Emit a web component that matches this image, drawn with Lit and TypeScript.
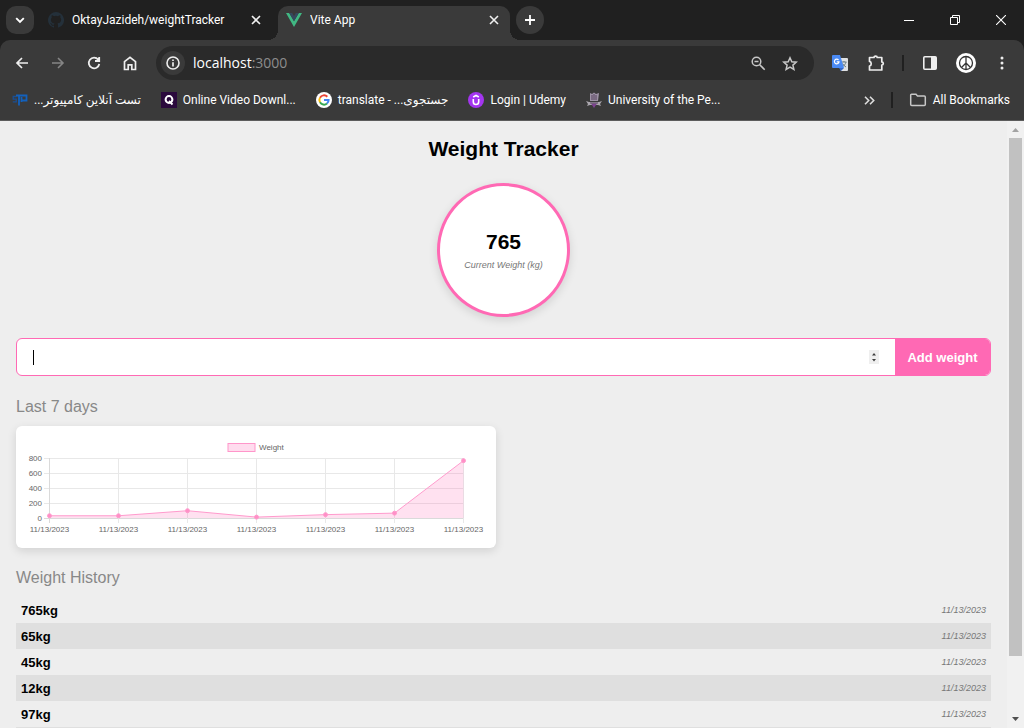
import { LitElement, html, css, svg } from "lit";
import { customElement, state } from "lit/decorators.js";

interface Entry {
  weight: number;
  date: string;
}

@customElement("browser-chrome")
class BrowserChrome extends LitElement {
  static styles = css`
    :host {
      display: block;
      background: #202020;
      color: #fff;
      font: 12px/16px Roboto, "Noto Sans", "DejaVu Sans", sans-serif;
    }
    button, a {
      font: inherit;
      color: inherit;
      background: none;
      border: 0;
      padding: 0;
      margin: 0;
      text-decoration: none;
    }
    svg { display: block; flex: none; }
    button { display: grid; place-items: center; flex: none; }
    .tabs {
      display: flex;
      height: 40px;
      padding: 6px 0 0 6px;
      box-sizing: border-box;
    }
    .search { width: 28px; height: 28px; border-radius: 10px; background: #3a3a3a; }
    .tab {
      display: flex;
      align-items: center;
      height: 28px;
      box-sizing: border-box;
      width: 232px;
      padding: 0 11px 0 8px;
      gap: 8px;
    }
    .tab.idle { width: 244px; padding: 0 17px 0 14px; }
    .tab .name { flex: 1; white-space: nowrap; overflow: hidden; }
    .tab.active {
      position: relative;
      height: 34px;
      padding-bottom: 6px;
      background: #3a3a3a;
      border-radius: 10px 10px 0 0;
    }
    .tab.active::before, .tab.active::after {
      content: "";
      position: absolute;
      bottom: 0;
      width: 10px;
      height: 10px;
    }
    .tab.active::before { right: 100%; background: radial-gradient(circle at 0 0, transparent 10px, #3a3a3a 10px); }
    .tab.active::after { left: 100%; background: radial-gradient(circle at 100% 0, transparent 10px, #3a3a3a 10px); }
    .add { width: 28px; height: 28px; border-radius: 50%; background: #3a3a3a; margin-left: 6px; }
    .window { display: flex; margin-left: auto; }
    .window button { width: 46px; height: 28px; }
    .toolbar {
      display: flex;
      align-items: center;
      height: 46px;
      background: #3a3a3a;
      border-radius: 10px 10px 0 0;
      padding-right: 4px;
    }
    .nav { display: flex; padding-left: 4px; }
    .nav button { width: 36px; height: 36px; }
    .omnibox {
      flex: 1;
      display: flex;
      align-items: center;
      height: 34px;
      margin-left: 8px;
      padding: 0 8px 0 5px;
      background: #2a2a2a;
      border-radius: 17px;
    }
    .info { width: 24px; height: 24px; border-radius: 50%; background: #3a3a3a; }
    .url { flex: 1; padding-left: 8px; font: 14px/18px "Open Sans", "Noto Sans", sans-serif; }
    .port { color: #8d8d8d; }
    .omnibox .act { width: 32px; height: 32px; }
    .tools { display: flex; align-items: center; padding-left: 8px; }
    .tools button { width: 36px; height: 36px; }
    .sep { width: 2px; height: 16px; background: #202020; flex: none; }
    .tools .sep { margin: 0 8px; }
    .bookmarks {
      display: flex;
      align-items: center;
      height: 35px;
      background: #3a3a3a;
      padding: 0 14px 6px 12px;
      border-bottom: 1px solid #5c5c5c;
      box-sizing: border-box;
      gap: 20px;
    }
    .bookmarks a { display: flex; align-items: center; gap: 6px; white-space: nowrap; }
    .more { margin-left: auto; }
    .bookmarks .sep { margin: 0 -4px; }
  `;

  private close() {
    return svg`<path d="M1 1l8 8M9 1l-8 8" stroke="#f0f0f0" stroke-width="1.6"/>`;
  }

  render() {
    return html`
      <div class="tabs">
        <button class="search" aria-label="Search tabs">
          <svg width="10" height="7" viewBox="0 0 10 7"><path d="M1.2 1.2L5 5l3.8-3.8" fill="none" stroke="#fff" stroke-width="1.9"/></svg>
        </button>
        <div class="tab idle">
          <svg width="16" height="16" viewBox="0 0 16 16"><path fill="#24303a" d="M8 0a8 8 0 0 0-2.53 15.59c.4.07.55-.17.55-.38v-1.49c-2.23.48-2.69-.95-2.69-.95-.36-.92-.89-1.17-.89-1.17-.73-.5.05-.49.05-.49.81.06 1.23.83 1.23.83.72 1.23 1.88.87 2.34.66.07-.52.28-.87.51-1.07-1.78-.2-3.64-.89-3.64-3.95 0-.87.31-1.59.82-2.15-.08-.2-.36-1.01.08-2.11 0 0 .67-.22 2.2.82a7.6 7.6 0 0 1 4 0c1.53-1.04 2.2-.82 2.2-.82.44 1.1.16 1.91.08 2.11.51.56.82 1.28.82 2.15 0 3.07-1.87 3.75-3.65 3.95.29.25.54.73.54 1.48v2.2c0 .21.15.46.55.38A8 8 0 0 0 8 0z"/></svg>
          <span class="name">OktayJazideh/weightTracker</span>
          <button aria-label="Close tab"><svg width="10" height="10">${this.close()}</svg></button>
        </div>
        <div class="tab active">
          <svg width="16" height="14" viewBox="0 0 16 14"><path fill="#41b883" d="M0 0h3.2L8 8.3 12.8 0H16L8 14z"/><path fill="#35495e" d="M3.2 0h3L8 3.2 9.8 0h3L8 8.3z"/></svg>
          <span class="name">Vite App</span>
          <button aria-label="Close tab"><svg width="10" height="10">${this.close()}</svg></button>
        </div>
        <button class="add" aria-label="New tab"><svg width="10" height="10"><path d="M5 0v10M0 5h10" stroke="#fff" stroke-width="1.8"/></svg></button>
        <div class="window">
          <button aria-label="Minimize"><svg width="10" height="10"><path d="M0 5.5h10" stroke="#fff"/></svg></button>
          <button aria-label="Restore"><svg width="10" height="10"><path d="M.5 2.5h7v7h-7zM2.5 2.5v-2h7v7h-2" fill="none" stroke="#fff"/></svg></button>
          <button aria-label="Close"><svg width="10" height="10"><path d="M0 0l10 10M10 0L0 10" stroke="#fff" stroke-width="1.1"/></svg></button>
        </div>
      </div>
      <div class="toolbar">
        <div class="nav">
          <button aria-label="Back"><svg width="14" height="12"><path d="M13 6H2M7 1L2 6l5 5" fill="none" stroke="#eee" stroke-width="1.7"/></svg></button>
          <button aria-label="Forward"><svg width="14" height="12"><path d="M1 6h11M7 1l5 5-5 5" fill="none" stroke="#858585" stroke-width="1.6"/></svg></button>
          <button aria-label="Reload"><svg width="14" height="14"><path d="M11.2 3.6A5.3 5.3 0 1 0 12.3 8M12.2 1v4H8" fill="none" stroke="#eee" stroke-width="1.8"/></svg></button>
          <button aria-label="Home"><svg width="14" height="15"><path d="M1.5 13.5V5.6L7 1.3l5.500 4.300v7.900H8.800V8.800H5.200v4.700z" fill="none" stroke="#eee" stroke-width="1.7"/></svg></button>
        </div>
        <div class="omnibox">
          <button class="info" aria-label="Site information"><svg width="14" height="14"><circle cx="7" cy="7" r="6" fill="none" stroke="#eee" stroke-width="1.6"/><path d="M7 6.2v4.2M7 3.4v1.7" stroke="#eee" stroke-width="1.7"/></svg></button>
          <span class="url">localhost<span class="port">:3000</span></span>
          <button class="act" aria-label="Zoom"><svg width="15" height="15"><circle cx="5.5" cy="5.5" r="4.3" fill="none" stroke="#c7c7c7" stroke-width="1.5"/><path d="M8.7 8.7l5 5M3.500 5.500h4" fill="none" stroke="#c7c7c7" stroke-width="1.6"/></svg></button>
          <button class="act" aria-label="Bookmark this page"><svg width="16" height="15" viewBox="0 0 16 15"><path d="M8 1.800l1.800 4 4.400.4-3.300 2.900 1 4.300L8 11.100l-3.900 2.300 1-4.300-3.300-2.900 4.400-.4z" fill="none" stroke="#c7c7c7" stroke-width="1.5"/></svg></button>
        </div>
        <div class="tools">
          <button aria-label="Translate"><svg width="16" height="16"><path d="M6 3h9a1 1 0 0 1 1 1v11a1 1 0 0 1-1 1H9z" fill="#dfe1e3"/><path d="M9.500 7h5M12 6v1M14 7c-.5 2-2 4-4 5M10.500 8.500c.8 1.500 2 2.500 3.500 3.500" fill="none" stroke="#687c86"/><path d="M1 0h7l4 13H1a1 1 0 0 1-1-1V1a1 1 0 0 1 1-1z" fill="#4a8af4"/><path d="M7 13h5l-3 3z" fill="#3568c9"/><path d="M6.500 5A2.300 2.300 0 1 0 7 6.800H4.700" fill="none" stroke="#fff" stroke-width="1.2"/></svg></button>
          <button aria-label="Extensions"><svg width="17" height="17"><path d="M2 2.500h4C6 .6 9.200.6 9.200 2.500h4.600v4.500c2 0 2 3 0 3v5H1.500v-4c2.300-.3 2.300-4.300 0-4.600V2.500z" fill="none" stroke="#eee" stroke-width="1.7" stroke-linejoin="round"/></svg></button>
          <span class="sep"></span>
          <button aria-label="Side panel"><svg width="14" height="14"><rect x=".8" y=".8" width="12.4" height="12.4" rx="1" fill="none" stroke="#eee" stroke-width="1.6"/><path d="M8 1h5v12H8z" fill="#eee"/></svg></button>
          <button aria-label="Profile"><svg width="20" height="20"><circle cx="10" cy="10" r="10" fill="#fff"/><circle cx="10" cy="10" r="6.5" fill="none" stroke="#333" stroke-width="1.3"/><path d="M10 3.500v13M10 10l-4.500 4.500M10 10l4.500 4.500" stroke="#333" stroke-width="1.3"/></svg></button>
          <button aria-label="Menu"><svg width="4" height="14" fill="#eee"><circle cx="2" cy="2" r="1.5"/><circle cx="2" cy="7" r="1.5"/><circle cx="2" cy="12" r="1.5"/></svg></button>
        </div>
      </div>
      <nav class="bookmarks">
        <a href="#"><svg width="16" height="16"><path d="M4.500 4.500H1.200v2.600h3v2.700H.8" fill="none" stroke="#1a4f94" stroke-width="1.3"/><path d="M4 3.500h10.500v5H9.500" fill="none" stroke="#1261bd" stroke-width="1.8"/><path d="M7 3v10.500M9.500 5v5" stroke="#1261bd" stroke-width="1.8"/></svg><span dir="rtl">تست آنلاین کامپیوتر...</span></a>
        <a href="#"><svg width="16" height="16"><path fill="#2b0a3d" d="M0 0h16v16H0z"/><circle cx="8" cy="7.5" r="3.4" fill="none" stroke="#fff" stroke-width="2"/><path d="M8 9l3.500 3.500" stroke="#fff" stroke-width="1.8"/></svg>Online Video Downl...</a>
        <a href="#"><svg width="16" height="16" fill="none" stroke-width="2"><circle cx="8" cy="8" r="8" fill="#fff"/><path d="M11.300 4.700A4.600 4.600 0 0 0 4 5.700" stroke="#ea4335"/><path d="M4 5.700a4.600 4.600 0 0 0 0 4.600" stroke="#fbbc05"/><path d="M4 10.300a4.600 4.600 0 0 0 7 1.200" stroke="#34a853"/><path d="M11 11.500A4.600 4.600 0 0 0 12.600 8H8" stroke="#4285f4"/></svg><span>translate - <bdi dir="rtl">جستجوی...</bdi></span></a>
        <a href="#"><svg width="16" height="16"><circle cx="8" cy="8" r="8" fill="#a435f0"/><path d="M5.300 7v2.800a2.700 2.700 0 0 0 5.400 0V7M5.200 5L8 3.500 10.800 5" fill="none" stroke="#fff" stroke-width="1.6"/></svg>Login | Udemy</a>
        <a href="#"><svg width="16" height="16"><path d="M4 1l2 1 2-1.500L10 2l3-1-1 8H4z" fill="#9d92a5"/><path d="M0 9l3 1h10l3-1-2 3 1 2-3-1H4l-3 1 1-2z" fill="#aaa6ad"/><path d="M5 11.500h6L8 16z" fill="#7d4390"/><path d="M6 3v5M8 2v6M10 3v5M4 11h8" stroke="#56425f"/></svg>University of the Pe...</a>
        <button class="more" aria-label="More bookmarks"><svg width="11" height="9"><path d="M1 .8l3.700 3.700L1 8.200M6 .8l3.700 3.700L6 8.200" fill="none" stroke="#ddd" stroke-width="1.6"/></svg></button>
        <span class="sep"></span>
        <a href="#"><svg width="18" height="14"><path d="M1.700 2v9.500a1 1 0 0 0 1 1h12.600a1 1 0 0 0 1-1V4a1 1 0 0 0-1-1H8.500L7 1.200H2.500a.8.8 0 0 0-.8.8z" fill="none" stroke="#c7c7c7" stroke-width="1.5"/></svg>All Bookmarks</a>
      </nav>
    `;
  }
}

@customElement("weight-chart")
class WeightChart extends LitElement {
  static properties = { entries: { attribute: false } };
  declare entries: Entry[];

  static styles = css`
    :host {
      display: block;
      max-width: 480px;
      background: #fff;
      border-radius: 6px;
      box-shadow: 0 3px 10px rgba(0, 0, 0, 0.12);
    }
    svg { display: block; width: 100%; height: auto; }
    text { font: 8px "Liberation Sans", Arial, sans-serif; fill: #666; }
    .grid { stroke: #e8e8e8; }
    .axis { stroke: #dadada; }
    .area { fill: rgba(255, 105, 180, 0.2); }
    .line { fill: none; stroke: #ff9bcd; }
    .dot { fill: #ff8fc6; stroke: #ff9bcd; }
    .key { fill: #ffdcee; stroke: #ff96ca; }
    .end { text-anchor: end; }
    .mid { text-anchor: middle; }
  `;

  render() {
    const x = (i: number) => 33.5 + i * 69;
    const y = (w: number) => 92 - w * 0.075;
    const line = this.entries.map((e, i) => `${x(i)},${y(e.weight)}`).join(" ");
    return html`
      <svg viewBox="0 0 480 122" role="img" aria-label="Weight over the last 7 days">
        <rect class="key" x="212" y="17.5" width="27" height="8"></rect>
        <text x="243" y="24">Weight</text>
        ${[800, 600, 400, 200, 0].map((v, i) => svg`
          <path class=${v ? "grid" : "axis"} d="M28 ${32.5 + i * 15}H447.5"/>
          <text class="end" x="26" y=${35 + i * 15}>${v}</text>`)}
        ${this.entries.map((e, i) => svg`
          <path class=${i ? "grid" : "axis"} d="M${x(i)} 32V97"/>
          <text class="mid" x=${x(i)} y="106">${e.date}</text>`)}
        <polygon class="area" points="33.5,92 ${line} 447.5,92"></polygon>
        <polyline class="line" points=${line}></polyline>
        ${this.entries.map((e, i) => svg`<circle class="dot" cx=${x(i)} cy=${y(e.weight)} r="2"/>`)}
      </svg>
    `;
  }
}

@customElement("app-root")
class AppRoot extends LitElement {
  static styles = css`
    :host {
      display: flex;
      flex-direction: column;
      height: 100vh;
      overflow: hidden;
      background: #eee;
      font-family: "Liberation Sans", Arial, sans-serif;
      color: #000;
    }
    browser-chrome { flex: none; }
    .view { flex: 1; display: flex; min-height: 0; }
    main {
      flex: 1;
      min-width: 0;
      overflow-y: auto;
      scrollbar-width: none;
      padding: 16px 16px 0;
    }
    h1 { margin: 0 0 22px; font-size: 21px; line-height: 24px; text-align: center; }
    .current {
      display: flex;
      flex-direction: column;
      align-items: center;
      justify-content: center;
      gap: 4px;
      width: 133px;
      height: 134px;
      box-sizing: border-box;
      margin: 0 auto 21px;
      border: 3px solid #ff69b4;
      border-radius: 50%;
      background: #fff;
      box-shadow: 0 3px 10px rgba(0, 0, 0, 0.12);
    }
    .current strong { font-size: 21px; line-height: 26px; }
    .current small { font-size: 9px; line-height: 12px; font-style: italic; color: #777; }
    form {
      display: flex;
      height: 38px;
      box-sizing: border-box;
      border: 1px solid #ff69b4;
      border-radius: 6px;
      overflow: hidden;
      background: #fff;
    }
    .field { position: relative; flex: 1; display: flex; }
    .field input {
      flex: 1;
      min-width: 0;
      border: 0;
      padding: 0 16px;
      font: 16px "Liberation Sans", Arial, sans-serif;
      outline: none;
      appearance: textfield;
      background: none;
    }
    .field input::-webkit-inner-spin-button { appearance: none; }
    .caret { position: absolute; left: 16px; top: 11px; width: 1px; height: 15px; background: #000; }
    .spin { position: absolute; right: 16px; top: 11px; width: 10px; height: 14px; background: #efefef; }
    form button {
      width: 95px;
      border: 0;
      padding: 0;
      background: #ff69b4;
      color: #fff;
      font: bold 13px "Liberation Sans", Arial, sans-serif;
    }
    h2 { margin: 21px 0 9px; font-size: 16px; line-height: 20px; font-weight: 400; color: #888; }
    .history h2 { margin-top: 20px; }
    ul { list-style: none; margin: 0; padding: 0; }
    li {
      display: flex;
      justify-content: space-between;
      align-items: center;
      height: 26px;
      padding: 0 5px;
      font-size: 13px;
    }
    li:nth-child(even) { background: #dfdfdf; }
    li time { font-size: 9px; font-style: italic; color: #777; }
    .scroll {
      display: flex;
      flex-direction: column;
      align-items: center;
      width: 17px;
      box-sizing: border-box;
      background: #f1f1f1;
    }
    .scroll svg { flex: none; display: block; }
    .thumb { flex: 19; width: 13px; background: #c1c1c1; }
    .rest { flex: 2; }
  `;

  @state() private entries: Entry[] = [765, 65, 45, 12, 97, 30, 30].map((weight) => ({
    weight,
    date: "11/13/2023",
  }));

  private add(e: Event) {
    e.preventDefault();
    const input = this.renderRoot.querySelector("input")!;
    const weight = Number(input.value);
    if (weight > 0) {
      this.entries = [{ weight, date: new Date().toLocaleDateString("en-US") }, ...this.entries];
      input.value = "";
    }
  }

  render() {
    return html`
      <browser-chrome></browser-chrome>
      <div class="view">
        <main>
          <h1>Weight Tracker</h1>
          <div class="current">
            <strong>${this.entries[0].weight}</strong>
            <small>Current Weight (kg)</small>
          </div>
          <form @submit=${this.add}>
            <div class="field">
              <input type="number" step="0.1" aria-label="Weight" />
              <span class="caret"></span>
              <svg class="spin" viewBox="0 0 10 14" aria-hidden="true"><path d="M3 5.500h4L5 3zM3 9h4l-2 2.500z" fill="#404040"/></svg>
            </div>
            <button type="submit">Add weight</button>
          </form>
          <section>
            <h2>Last 7 days</h2>
            <weight-chart .entries=${this.entries.slice(0, 7).reverse()}></weight-chart>
          </section>
          <section class="history">
            <h2>Weight History</h2>
            <ul>
              ${this.entries.map((e) => html`<li><strong>${e.weight}kg</strong><time>${e.date}</time></li>`)}
            </ul>
          </section>
        </main>
        <div class="scroll" aria-hidden="true">
          <svg width="17" height="17"><path d="M5 11h7L8.500 7z" fill="#a3a3a3"/></svg>
          <div class="thumb"></div>
          <div class="rest"></div>
          <svg width="17" height="17"><path d="M5 6h7l-3.500 4z" fill="#505050"/></svg>
        </div>
      </div>
    `;
  }
}
